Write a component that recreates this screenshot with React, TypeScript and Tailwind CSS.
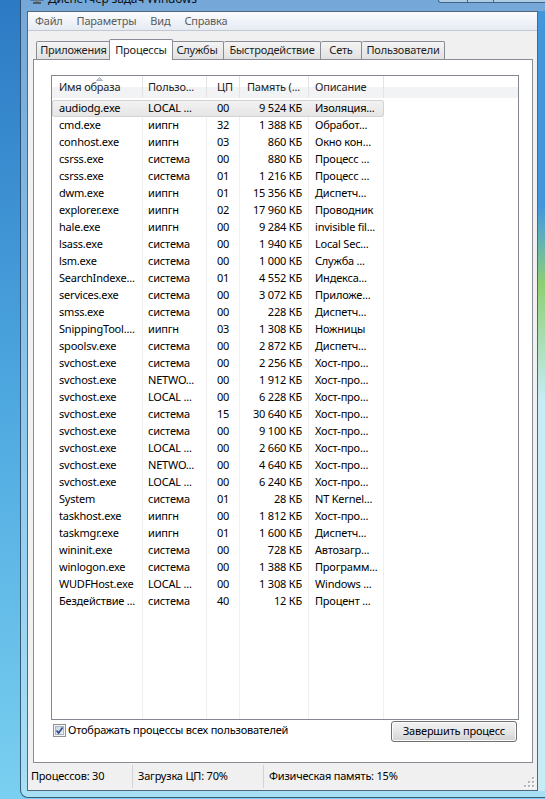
import React from "react";

type Proc = [string, string, string, string, string];

const procs: Proc[] = [
  ["audiodg.exe", "LOCAL ...", "00", "9 524 КБ", "Изоляция..."],
  ["cmd.exe", "иипгн", "32", "1 388 КБ", "Обработ..."],
  ["conhost.exe", "иипгн", "03", "860 КБ", "Окно кон..."],
  ["csrss.exe", "система", "00", "880 КБ", "Процесс ..."],
  ["csrss.exe", "система", "01", "1 216 КБ", "Процесс ..."],
  ["dwm.exe", "иипгн", "01", "15 356 КБ", "Диспетч..."],
  ["explorer.exe", "иипгн", "02", "17 960 КБ", "Проводник"],
  ["hale.exe", "иипгн", "00", "9 284 КБ", "invisible fil..."],
  ["lsass.exe", "система", "00", "1 940 КБ", "Local Sec..."],
  ["lsm.exe", "система", "00", "1 000 КБ", "Служба ..."],
  ["SearchIndexe...", "система", "01", "4 552 КБ", "Индекса..."],
  ["services.exe", "система", "00", "3 072 КБ", "Приложе..."],
  ["smss.exe", "система", "00", "228 КБ", "Диспетч..."],
  ["SnippingTool....", "иипгн", "03", "1 308 КБ", "Ножницы"],
  ["spoolsv.exe", "система", "00", "2 872 КБ", "Диспетч..."],
  ["svchost.exe", "система", "00", "2 256 КБ", "Хост-про..."],
  ["svchost.exe", "NETWO...", "00", "1 912 КБ", "Хост-про..."],
  ["svchost.exe", "LOCAL ...", "00", "6 228 КБ", "Хост-про..."],
  ["svchost.exe", "система", "15", "30 640 КБ", "Хост-про..."],
  ["svchost.exe", "система", "00", "9 100 КБ", "Хост-про..."],
  ["svchost.exe", "LOCAL ...", "00", "2 660 КБ", "Хост-про..."],
  ["svchost.exe", "NETWO...", "00", "4 640 КБ", "Хост-про..."],
  ["svchost.exe", "LOCAL ...", "00", "6 240 КБ", "Хост-про..."],
  ["System", "система", "01", "28 КБ", "NT Kernel..."],
  ["taskhost.exe", "иипгн", "00", "1 812 КБ", "Хост-про..."],
  ["taskmgr.exe", "иипгн", "01", "1 600 КБ", "Диспетч..."],
  ["wininit.exe", "система", "00", "728 КБ", "Автозагр..."],
  ["winlogon.exe", "система", "00", "1 388 КБ", "Программ..."],
  ["WUDFHost.exe", "LOCAL ...", "00", "1 308 КБ", "Windows ..."],
  ["Бездействие ...", "система", "40", "12 КБ", "Процент ..."],
];

const menu = ["Файл", "Параметры", "Вид", "Справка"];

const tabClass =
  "h-[18px] shrink-0 flex items-center justify-center border-t border-r border-[#898c95] rounded-t-[2px] bg-linear-to-b from-[#f4f4f4] to-[#e1e1e1] text-[#1e1e1e] whitespace-nowrap";

function Checkbox() {
  return (
    <svg width="13" height="13" viewBox="0 0 13 13">
      <defs>
        <linearGradient id="cb" x1="0" y1="0" x2="1" y2="1">
          <stop offset="0" stopColor="#c9d3e2" />
          <stop offset="1" stopColor="#f1f4f9" />
        </linearGradient>
      </defs>
      <rect x="0.5" y="0.5" width="12" height="12" fill="#f6f6f6" stroke="#8e8f8f" />
      <rect x="2.5" y="2.5" width="8" height="8" fill="url(#cb)" stroke="#a9b4c4" />
      <path d="M3.6 6.4 L5.6 9 L9.6 3.4" fill="none" stroke="#2f4f8e" strokeWidth="1.7" />
    </svg>
  );
}

function Gripper() {
  const dots = [
    [8, 0],
    [8, 4],
    [4, 4],
    [8, 8],
    [4, 8],
    [0, 8],
  ];
  return (
    <svg width="11" height="11" viewBox="0 0 11 11">
      {dots.map(([x, y], i) => (
        <g key={i}>
          <rect x={x + 1} y={y + 1} width="2" height="2" fill="#ffffff" />
          <rect x={x} y={y} width="2" height="2" fill="#b4b8bd" />
        </g>
      ))}
    </svg>
  );
}

export default function App() {
  return (
    <div className="w-[545px] h-[799px] overflow-hidden flex bg-linear-to-b from-[#2c7ac4] via-[#4ea8e0] to-[#79d0f0] font-['Noto_Sans',sans-serif] text-[11px] tracking-[-0.2px] text-black">
      {/* desktop strip on the left */}
      <div className="w-[20px] shrink-0" />

      {/* window */}
      <div className="w-[526px] shrink-0 h-[798px] flex flex-col border-l border-b border-[#1d3b5a]/80 rounded-bl-[8px] bg-white/35">
        {/* title bar, mostly cut off */}
        <div className="h-[11px] shrink-0 flex overflow-hidden">
          <div className="w-[9px] shrink-0" />
          <svg className="self-end mb-[7px] shrink-0" width="14" height="14" viewBox="0 0 14 14">
            <rect x="1" y="1" width="12" height="9" fill="#3b6ea5" stroke="#33475e" />
            <path d="M3 8 L5 5 L7 7 L10 3" fill="none" stroke="#7ef07a" strokeWidth="1" />
            <rect x="5" y="10" width="4" height="2" fill="#6f7d8c" />
            <rect x="3" y="12" width="8" height="2" fill="#4f5b68" />
          </svg>
          <div className="self-end mb-[6px] ml-[4px] text-[12px] leading-[12px] whitespace-nowrap text-[#111]">
            Диспетчер задач Windows
          </div>
          <div className="flex-1" />
          <div className="self-start flex h-[3px] shrink-0">
            <div className="w-[29px] border-l border-b border-[#2c4a6a]/80 rounded-bl-[4px] bg-white/40" />
            <div className="w-[26px] border-l border-b border-[#2c4a6a]/80 bg-white/40" />
            <div className="w-[53px] border-l border-b border-[#2c4a6a]/80 bg-white/40" />
          </div>
        </div>

        {/* frame + client */}
        <div className="h-[780px] shrink-0 flex">
          <div className="w-[6px] shrink-0" />

          <div className="w-[511px] shrink-0 flex flex-col border border-[#3f5873]/90 bg-[#f0f0f0]">
            {/* menu bar */}
            <div className="h-[19px] shrink-0 flex items-center pl-[0px] border-b border-[#c3c9d4] bg-linear-to-b from-[#fafbfd] to-[#e6ebf3] text-[#5b5b5b]">
              {menu.map((m) => (
                <div key={m} className="px-[7px] leading-[18px]">
                  {m}
                </div>
              ))}
            </div>

            {/* tab strip */}
            <div className="h-[28px] shrink-0 flex items-end pl-[8px]">
              <div className={`${tabClass} w-[75px] border-l`}>Приложения</div>
              <div className="relative z-10 -mx-[2px] -mb-px w-[64px] h-[21px] shrink-0 flex items-center justify-center border-l border-t border-r border-[#898c95] rounded-t-[2px] bg-white text-[#1e1e1e]">
                Процессы
              </div>
              <div className={`${tabClass} w-[53px]`}>Службы</div>
              <div className={`${tabClass} w-[97px]`}>Быстродействие</div>
              <div className={`${tabClass} w-[41px]`}>Сеть</div>
              <div className={`${tabClass} w-[83px]`}>Пользователи</div>
            </div>

            {/* tab panel */}
            <div className="ml-[5px] mr-[4px] h-[704px] shrink-0 flex flex-col border border-[#898c95] bg-white pt-[15px] pl-[17px] pr-[13px]">
              {/* list view */}
              <div className="h-[645px] shrink-0 flex flex-col border border-[#828790] bg-white">
                {/* header */}
                <div className="h-[22px] shrink-0 flex bg-linear-to-b from-white from-50% to-[#f2f3f5] to-50% text-[#1e1e1e]">
                  <div className="relative w-[91px] shrink-0 flex items-center pl-[7px] border-r border-[#e2e3e5]">
                    <svg className="absolute left-[44px] top-[1px]" width="7" height="4" viewBox="0 0 7 4">
                      <path d="M0.5 3.5 L3.5 0.5 L6.5 3.5 Z" fill="#c9d3df" stroke="#97a6b9" strokeWidth="0.8" />
                    </svg>
                    Имя образа
                  </div>
                  <div className="w-[64px] shrink-0 flex items-center pl-[5px] border-r border-[#e2e3e5]">Пользо...</div>
                  <div className="w-[33px] shrink-0 flex items-center pl-[10px] border-r border-[#e2e3e5]">ЦП</div>
                  <div className="w-[69px] shrink-0 flex items-center pl-[7px] border-r border-[#e2e3e5]">Память (...</div>
                  <div className="w-[75px] shrink-0 flex items-center pl-[6px] border-r border-[#e2e3e5]">Описание</div>
                  <div className="flex-1" />
                </div>

                {/* rows */}
                <div className="flex-1 flex flex-col pt-[2px]">
                  {procs.map((p, i) => {
                    const sel = i === 0;
                    const sep = sel ? "border-transparent" : "border-[#efefef]";
                    return (
                      <div
                        key={i}
                        className={
                          sel
                            ? "w-[332px] h-[17px] shrink-0 flex rounded-[3px] bg-linear-to-b from-[#f3f3f3] to-[#e5e5e5] shadow-[inset_0_0_0_1px_#d3d3d3]"
                            : "w-[332px] h-[17px] shrink-0 flex"
                        }
                      >
                        <div className={`w-[91px] shrink-0 flex items-center pl-[7px] border-r whitespace-nowrap overflow-hidden ${sep}`}>{p[0]}</div>
                        <div className={`w-[64px] shrink-0 flex items-center pl-[5px] border-r whitespace-nowrap overflow-hidden ${sep}`}>{p[1]}</div>
                        <div className={`w-[33px] shrink-0 flex items-center pl-[10px] border-r ${sep}`}>{p[2]}</div>
                        <div className={`w-[69px] shrink-0 flex items-center justify-end pr-[6px] border-r whitespace-nowrap ${sep}`}>{p[3]}</div>
                        <div className={`w-[75px] shrink-0 flex items-center pl-[6px] border-r whitespace-nowrap overflow-hidden ${sep}`}>{p[4]}</div>
                      </div>
                    );
                  })}
                  {/* empty area keeps the column lines */}
                  <div className="flex-1 flex">
                    <div className="w-[91px] shrink-0 border-r border-[#efefef]" />
                    <div className="w-[64px] shrink-0 border-r border-[#efefef]" />
                    <div className="w-[33px] shrink-0 border-r border-[#efefef]" />
                    <div className="w-[69px] shrink-0 border-r border-[#efefef]" />
                    <div className="w-[75px] shrink-0 border-r border-[#efefef]" />
                  </div>
                </div>
              </div>

              {/* bottom controls */}
              <div className="h-[42px] shrink-0 flex items-start justify-between pt-[1px]">
                <div className="ml-[2px] mt-[1px] flex items-center gap-[2px]">
                  <Checkbox />
                  <span>Отображать процессы всех пользователей</span>
                </div>
                <button className="mr-[2px] w-[126px] h-[21px] rounded-[3px] border border-[#707070] bg-linear-to-b from-[#f3f3f3] via-[#e8e8e8] via-45% to-[#d2d2d2] shadow-[inset_0_0_0_1px_#fbfbfb] text-black">
                  Завершить процесс
                </button>
              </div>
            </div>

            {/* status bar */}
            <div className="h-[27px] shrink-0 flex">
              <div className="w-[104px] shrink-0 flex items-center pl-[3px]">Процессов: 30</div>
              <div className="w-[131px] shrink-0 flex items-center pl-[5px] border-l border-[#d3d3d3] my-[2px]">Загрузка ЦП: 70%</div>
              <div className="flex-1 flex items-center pl-[5px] border-l border-[#d3d3d3] my-[2px]">Физическая память: 15%</div>
              <div className="self-end mb-[2px] mr-[2px]">
                <Gripper />
              </div>
            </div>
          </div>

          <div className="w-[8px] shrink-0 bg-linear-to-b from-[#4496dc] from-25% via-[#8fcf70] via-35% to-[#c8ecf6] to-50%" />
        </div>

        {/* bottom frame */}
        <div className="flex-1" />
      </div>
    </div>
  );
}
